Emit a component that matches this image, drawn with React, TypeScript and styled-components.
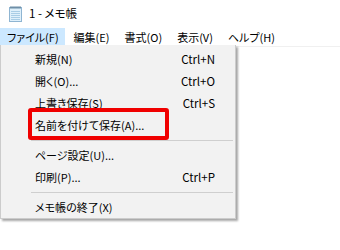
import React from 'react';
import styled, { createGlobalStyle } from 'styled-components';

const GlobalStyle = createGlobalStyle`
  html, body {
    margin: 0;
    padding: 0;
    background: #ffffff;
  }
  body {
    font-family: "Noto Sans CJK JP", "Noto Sans", sans-serif;
    font-size: 11px;
    font-feature-settings: "palt";
    color: #000;
  }
`;

const Window = styled.div`
  position: relative;
  width: 340px;
  height: 250px;
  overflow: hidden;
  background: #fff;
`;

const TitleBar = styled.div`
  height: 27px;
  display: flex;
  align-items: center;
  gap: 7px;
  padding-left: 9px;
`;

const TitleText = styled.span`
  font-size: 11.5px;
  line-height: 1;
`;

const MenuBar = styled.div`
  height: 18px;
  padding-top: 1px;
  display: flex;
  border-bottom: 1px solid #f0f0f0;
`;

const MenuTitle = styled.div<{ $open?: boolean }>`
  height: 18px;
  padding: 0 6px 0 7px;
  margin-right: 2px;
  display: flex;
  align-items: center;
  background: ${({ $open }) => ($open ? '#cce8ff' : 'transparent')};
  white-space: nowrap;
`;

const Dropdown = styled.div`
  position: absolute;
  left: 0;
  top: 45px;
  width: 234px;
  padding: 3px 0 0;
  background: #f2f2f2;
  border: 1px solid #cccccc;
  border-top: none;
  box-shadow: 2px 2px 2px rgba(0, 0, 0, 0.35);
`;

const Item = styled.div`
  height: 22px;
  display: flex;
  align-items: center;
  justify-content: space-between;
  padding: 0 20px 0 34px;
  white-space: nowrap;
`;

const Shortcut = styled.span`
  text-align: right;
  font-size: 11.5px;
`;

const Separator = styled.div`
  height: 8px;
  display: flex;
  align-items: center;
  padding: 0 2px 0 30px;
  &::after {
    content: '';
    flex: 1;
    height: 1px;
    background: #cfcfcf;
  }
`;

const Highlight = styled.div`
  position: absolute;
  left: 27px;
  top: 63px;
  width: 133px;
  height: 24px;
  border: 4px solid #f00000;
  border-radius: 3px;
  pointer-events: none;
`;

const NotepadIcon = () => (
  <svg width="13" height="16" viewBox="0 0 13 16">
    <rect x="0.5" y="1.5" width="12" height="14" fill="#dff0fb" stroke="#8fb5d2" />
    <rect x="1" y="0.5" width="11" height="2" fill="#6f8fa8" />
    {[5, 7, 9, 11, 13].map((y) => (
      <line key={y} x1="2" x2="11" y1={y + 0.5} y2={y + 0.5} stroke="#a9cde6" />
    ))}
  </svg>
);

type Entry = { label: string; shortcut?: string } | 'sep';

const entries: Entry[] = [
  { label: '新規(N)', shortcut: 'Ctrl+N' },
  { label: '開く(O)...', shortcut: 'Ctrl+O' },
  { label: '上書き保存(S)', shortcut: 'Ctrl+S' },
  { label: '名前を付けて保存(A)...' },
  'sep',
  { label: 'ページ設定(U)...' },
  { label: '印刷(P)...', shortcut: 'Ctrl+P' },
  'sep',
  { label: 'メモ帳の終了(X)' },
];

const menus = ['編集(E)', '書式(O)', '表示(V)', 'ヘルプ(H)'];

export default function App() {
  return (
    <Window>
      <GlobalStyle />
      <TitleBar>
        <NotepadIcon />
        <TitleText>1 - メモ帳</TitleText>
      </TitleBar>
      <MenuBar>
        <MenuTitle $open>ファイル(F)</MenuTitle>
        {menus.map((m) => (
          <MenuTitle key={m}>{m}</MenuTitle>
        ))}
      </MenuBar>
      <Dropdown>
        {entries.map((e, i) =>
          e === 'sep' ? (
            <Separator key={i} />
          ) : (
            <Item key={i}>
              <span>{e.label}</span>
              {e.shortcut && <Shortcut>{e.shortcut}</Shortcut>}
            </Item>
          ),
        )}
        <Highlight />
      </Dropdown>
    </Window>
  );
}
